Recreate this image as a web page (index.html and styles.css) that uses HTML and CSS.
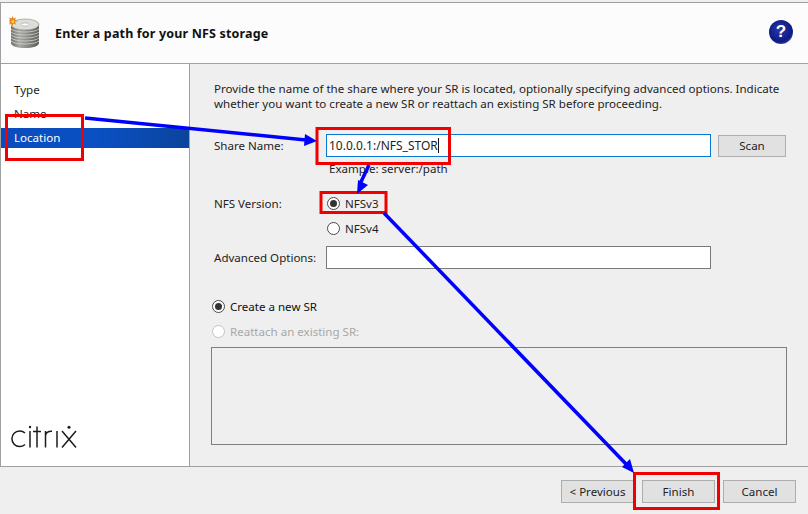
FILE: index.html
```html
<!DOCTYPE html>
<html lang="en">
<head>
<meta charset="utf-8">
<title>Enter a path for your NFS storage</title>
<link rel="stylesheet" href="styles.css">
</head>
<body>
<div class="window">
  <header class="header">
    <svg class="disk" width="38" height="34" viewBox="0 0 38 34">
      <defs>
        <linearGradient id="dk" x1="0" x2="1" y1="0" y2="0">
          <stop offset="0" stop-color="#6e6e6a"/><stop offset=".3" stop-color="#a8a8a4"/><stop offset="1" stop-color="#5c5c58"/>
        </linearGradient>
      </defs>
      <path d="M2 10v18c0 3 6 5 14 5s14-2 14-5V10z" fill="url(#dk)"/>
      <path d="M2 14c4 4 24 4 28 0M2 17c4 4 24 4 28 0M2 20c4 4 24 4 28 0M2 23c4 4 24 4 28 0M2 26c4 4 24 4 28 0" fill="none" stroke="#d4d4d0" stroke-width=".8"/>
      <ellipse cx="16" cy="9.500" rx="14" ry="5.500" fill="#dcdcd9" stroke="#8c8c88" stroke-width=".6"/>
      <ellipse cx="16" cy="9.500" rx="4" ry="1.600" fill="#fbfbfb" stroke="#a5a5a1" stroke-width=".6"/>
      <path d="M3.500 1l1 2.500 2.500-1-1 2.500 2.500 1-2.500 1 1 2.500-2.500-1-1 2.500-1-2.500-2.500 1 1-2.500-1-1 1-1-1-2.500 2.500 1z" fill="#e8821a"/>
      <circle cx="3.800" cy="6.500" r="1.500" fill="#f6d23c"/>
    </svg>
    <h1 class="title">Enter a path for your NFS storage</h1>
    <div class="help">?</div>
  </header>
  <div class="middle">
    <aside class="sidebar">
      <nav class="steps">
        <div class="step">Type</div>
        <div class="step">Name</div>
        <div class="step active">Location</div>
      </nav>
      <svg class="citrix" width="68" height="24" viewBox="0 0 68 24" fill="none" stroke="#1c1c1c" stroke-width="1.500">
        <path d="M15 8a7.800 7.800 0 1 0 0 11.500"/>
        <path d="M20 6v16.500M27 1.500v21M23 6.500h8M35.500 22.500V6M35.500 11c0-3 2.500-5 6.500-4.800M47 6v16.500"/>
        <path d="M52 6l14 16.500M66 6L52 22.500"/>
        <circle cx="20" cy="2" r="1.200" fill="#1c1c1c" stroke="none"/>
        <circle cx="59" cy="2.200" r="1.500" fill="#1c1c1c" stroke="none"/>
      </svg>
    </aside>
    <main class="content">
      <p class="intro">Provide the name of the share where your SR is located, optionally specifying advanced options. Indicate whether you want to create a new SR or reattach an existing SR before proceeding.</p>
      <div class="row row-share">
        <label class="label">Share Name:</label>
        <div class="field focus">10.0.0.1:/NFS_STOR<span class="caret"></span></div>
        <button class="btn scan">Scan</button>
      </div>
      <div class="hint">Example: server:/path</div>
      <div class="row row-nfs">
        <span class="label">NFS Version:</span>
        <div class="radio-line"><span class="radio on"></span>NFSv3</div>
      </div>
      <div class="row row-nfs4">
        <span class="label"></span>
        <div class="radio-line"><span class="radio"></span>NFSv4</div>
      </div>
      <div class="row row-adv">
        <label class="label">Advanced Options:</label>
        <div class="field"></div>
      </div>
      <div class="radio-line create"><span class="radio on"></span>Create a new SR</div>
      <div class="radio-line reattach"><span class="radio"></span>Reattach an existing SR:</div>
      <div class="srbox"></div>
    </main>
  </div>
  <footer class="footer">
    <button class="btn prev">&lt; Previous</button>
    <button class="btn finish">Finish</button>
    <button class="btn cancel">Cancel</button>
  </footer>
  <svg class="marks" width="808" height="514" viewBox="0 0 808 514">
    <g fill="none" stroke="#f00000" stroke-width="3">
      <rect x="6.500" y="115.500" width="76" height="44"/>
      <rect x="317" y="128.500" width="132.500" height="35"/>
      <rect x="321" y="192.500" width="65" height="20"/>
      <rect x="634.500" y="473.500" width="84" height="35"/>
    </g>
    <g stroke="#0000ff" stroke-width="3.500" fill="none">
      <path d="M85 118L306 140"/>
      <path d="M369 165L360 184"/>
      <path d="M384 213L626 464"/>
    </g>
    <g fill="#0000ff">
      <path d="M317 141L305 134L304 146z"/>
      <path d="M357 194L358 180L368 185z"/>
      <path d="M634 473L622 467L630 459z"/>
    </g>
  </svg>
</div>
</body>
</html>
```
FILE: styles.css
```css
* { box-sizing: border-box; }
html, body { margin: 0; padding: 0; }
body {
  width: 808px;
  height: 514px;
  overflow: hidden;
  background: #efefef;
  font-family: "Noto Sans", "Open Sans", "Liberation Sans", sans-serif;
  font-size: 11.550px;
  color: #1e1e1e;
}
.window {
  position: relative;
  width: 808px;
  height: 514px;
  padding-top: 2px;
  display: flex;
  flex-direction: column;
}
.header {
  height: 62px;
  flex: none;
  display: flex;
  align-items: center;
  background: #fcfcfc;
  border-top: 1px solid #a0a0a0;
  border-left: 1px solid #a0a0a0;
  border-bottom: 1px solid #a0a0a0;
  padding-left: 8px;
}
.disk { flex: none; margin-top: -3px; }
.title {
  margin: 0 0 0 8px;
  font-size: 12.500px;
  font-weight: 700;
  letter-spacing: .16px;
  color: #111;
  flex: 1;
}
.help {
  width: 24px;
  height: 24px;
  margin-right: 15px;
  margin-top: -2px;
  border-radius: 50%;
  background: radial-gradient(circle at 45% 40%, #2a3aa6 0, #0c1a86 62%, #7f84a0 96%);
  color: #fff;
  font: 700 17px/24px "Liberation Sans", sans-serif;
  text-align: center;
}
.middle {
  flex: none;
  height: 403px;
  display: flex;
}
.sidebar {
  width: 190px;
  flex: none;
  background: #fff;
  border-left: 1px solid #a0a0a0;
  border-right: 1px solid #a0a0a0;
  border-bottom: 1px solid #a0a0a0;
  display: flex;
  flex-direction: column;
  justify-content: space-between;
  padding-top: 14px;
}
.step {
  height: 24px;
  line-height: 24px;
  padding-left: 13px;
}
.step.active {
  height: 20px;
  line-height: 20px;
  margin-top: 2px;
  color: #fff;
  background: linear-gradient(90deg, #0a4cbc 0, #0a50c4 50%, #0a449c 100%);
}
.citrix { margin: 0 0 17px 9px; }
.content {
  flex: 1;
  border-bottom: 1px solid #a0a0a0;
  padding: 17px 21px 0 24px;
  background: #efefef;
}
.intro { margin: 0; line-height: 15px; width: 575px; }
.row { display: flex; align-items: center; }
.label { width: 112px; flex: none; }
.row-share { margin-top: 23px; height: 23px; }
.field {
  width: 385px;
  height: 23px;
  flex: none;
  background: #fff;
  border: 1px solid #7a7a7a;
  line-height: 21px;
  padding-left: 2px;
  font-size: 12px;
}
.field.focus { border-color: #0a78d2; }
.caret {
  display: inline-block;
  width: 1px;
  height: 15px;
  background: #111;
  vertical-align: -3px;
}
.btn {
  font: inherit;
  color: #1e1e1e;
  background: #e1e1e1;
  border: 1px solid #adadad;
  height: 22px;
  padding: 0;
}
.scan { width: 68px; margin-left: 7px; }
.hint { margin: 3px 0 0 115px; height: 17px; line-height: 17px; }
.radio-line { display: flex; align-items: center; }
.radio {
  width: 13px;
  height: 13px;
  flex: none;
  border: 1px solid #4a4a4a;
  border-radius: 50%;
  background: #fff;
  margin-right: 5px;
  position: relative;
}
.radio.on::after {
  content: "";
  position: absolute;
  inset: 2px;
  border-radius: 50%;
  background: #333;
}
.row-nfs { margin-top: 16px; height: 20px; }
.row-nfs .radio-line, .row-nfs4 .radio-line { margin-left: 1px; }
.row-nfs4 { margin-top: 5px; height: 20px; }
.row-adv { margin-top: 8px; height: 23px; }
.create { margin-top: 27px; height: 20px; margin-left: -2px; color: #111; }
.reattach { margin-top: 5px; height: 20px; margin-left: -2px; color: #a8a8a8; }
.reattach .radio { border-color: #c4c4c4; }
.srbox {
  margin: 6px 0 0 -3px;
  width: 576px;
  height: 98px;
  border: 1px solid #7f7f7f;
  background: #efefef;
}
.footer {
  flex: 1;
  display: flex;
  justify-content: flex-end;
  align-items: flex-start;
  padding: 13px 12px 0 0;
}
.prev { width: 73px; height: 23px; }
.finish { width: 73px; height: 23px; margin-left: 8px; }
.cancel { width: 73px; height: 23px; margin-left: 8px; }
.marks { position: absolute; left: 0; top: 0; pointer-events: none; }
```
